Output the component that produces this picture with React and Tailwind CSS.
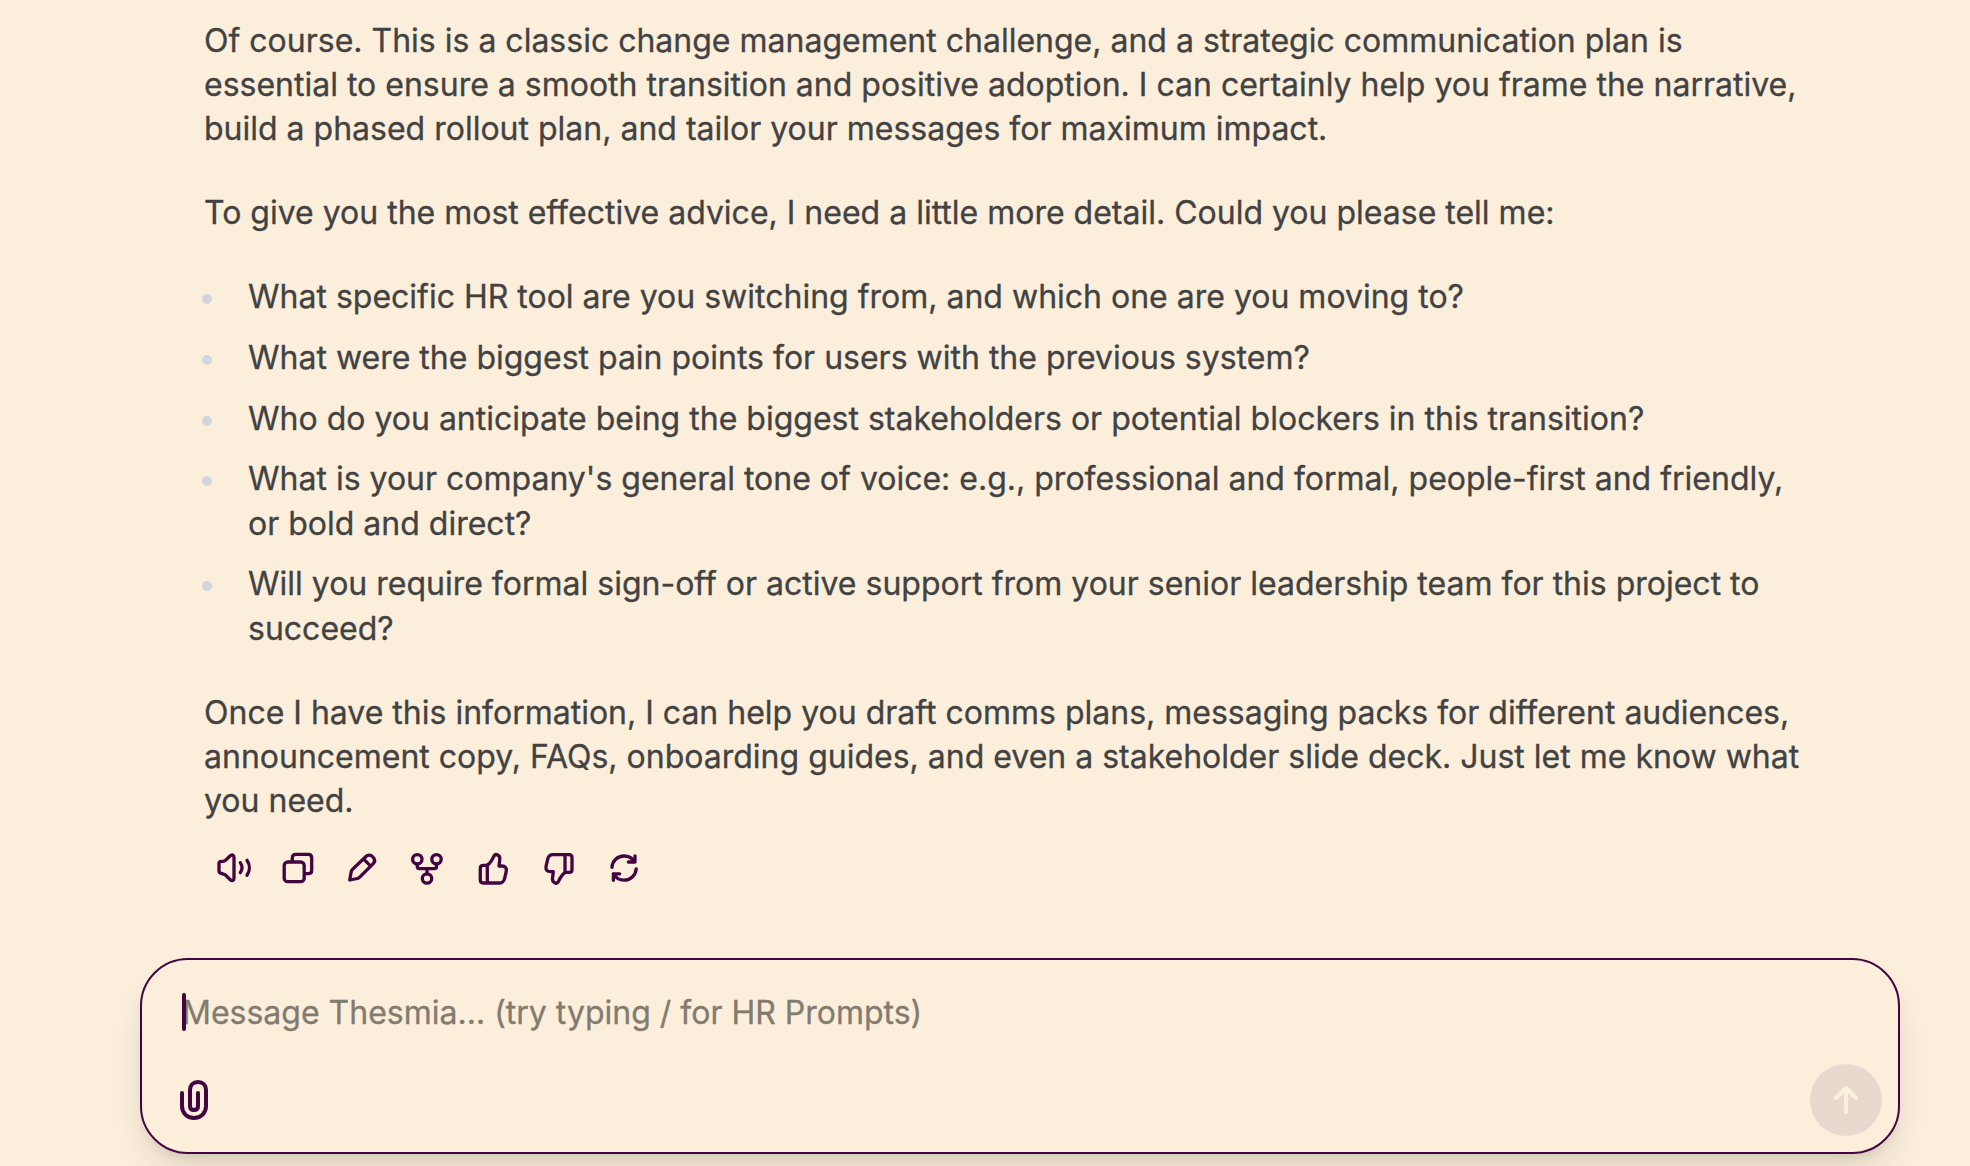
import React from "react";

const questions = [
  "What specific HR tool are you switching from, and which one are you moving to?",
  "What were the biggest pain points for users with the previous system?",
  "Who do you anticipate being the biggest stakeholders or potential blockers in this transition?",
  "What is your company's general tone of voice: e.g., professional and formal, people-first and friendly, or bold and direct?",
  "Will you require formal sign-off or active support from your senior leadership team for this project to succeed?",
];

const ThumbShape = () => (
  <path d="M11.3 16V33M7.3 15.3H9.8C11.5 15.3 12.3 14.6 13.2 13.6C14.6 12 15.5 10.8 16.3 9.3L18 6C18.7 4.7 19.6 4.2 20.8 4.6C23 5.3 24.1 7.2 23.8 9.4L23 16H25.8C29.3 16 31 18.2 30.2 21.5L28.6 28.5C27.9 31.6 26.3 33 23.3 33H7.3C5.3 33 4.3 32 4.3 30V18.3C4.3 16.3 5.3 15.3 7.3 15.3Z" />
);

const actions = [
  {
    label: "Read aloud",
    icon: (
      <>
        <path d="M3 13.6C3 12 3.8 11.3 5.3 11.3H7.2C8.3 11.3 8.9 11 9.7 10.2L14 6C15.9 4.2 18 4.8 18 7.5V28C18 30.7 15.9 31.3 14 29.5L9.7 25.3C8.9 24.5 8.3 24.2 7.2 24C4.2 23.6 3 22.9 3 21Z" />
        <path d="M24.3 12.7C26.3 15.7 26.3 19.7 24.3 22.7M31 10.3C34.1 14.8 34.1 20.8 31 25.3" />
      </>
    ),
  },
  {
    label: "Copy",
    icon: (
      <>
        <rect x="3.2" y="12" width="20" height="19.7" rx="3.5" />
        <path d="M11.3 11.5V7.8C11.3 5.5 12.5 4.3 14.8 4.3H27.2C29.5 4.3 30.7 5.5 30.7 7.8V20.2C30.7 22.5 29.5 23.7 27.2 23.7H24" />
      </>
    ),
  },
  {
    label: "Edit",
    icon: (
      <path d="M18 9.3L24.4 15.8M3.7 30L5.2 21.8C5.4 20.8 5.8 20.1 6.5 19.4L19.7 6.7C22 4.4 24.7 4.6 26.8 6.8C29 9 29.1 11.8 26.8 14.2L13.7 27.2C13 27.9 12.4 28.3 11.4 28.5Z" />
    ),
  },
  {
    label: "Branch",
    icon: (
      <>
        <circle cx="6.3" cy="9.3" r="4.7" />
        <circle cx="25.5" cy="9.3" r="4.7" />
        <circle cx="16" cy="28.5" r="4.7" />
        <path d="M6.3 14V16.6C6.3 18 7 18.7 8.3 18.7H23.5C24.8 18.7 25.5 18 25.5 16.6V14M16 18.7V23.8" />
      </>
    ),
  },
  { label: "Good response", icon: <ThumbShape /> },
  {
    label: "Bad response",
    icon: (
      <g transform="translate(35.3 37.7) rotate(180)">
        <ThumbShape />
      </g>
    ),
  },
  {
    label: "Regenerate",
    icon: (
      <>
        <path d="M6 17.3C6.3 10.8 11.5 6 18 6C22.6 6 26.6 8.3 28.7 12M29 5.8V12H22.4" />
        <path d="M30.2 18.8C29.6 25.5 24.6 30.2 18 30.2C13.5 30.2 9.5 27.6 7.4 23.8M13.7 23.8H7.4V30.3" />
      </>
    ),
  },
];

const Message = () => {
  return (
    <article className="ml-[204px] w-[1606px] text-[32px] leading-[44px] text-[#424242] [-webkit-text-stroke:0.3px]">
      <p>
        Of course. This is a classic change management challenge, and a strategic communication plan is
        <br />
        essential to ensure a smooth transition and positive adoption. I can certainly help you frame the narrative,
        <br />
        build a phased rollout plan, and tailor your messages for maximum impact.
      </p>
      <p className="mt-10">
        To give you the most effective advice, I need a little more detail. Could you please tell me:
      </p>

      {/* Questions */}
      <ul className="mt-[40.4px] flex flex-col gap-4">
        {questions.map((question) => (
          <li key={question} className="flex leading-[44.6px]">
            <span className="-ml-0.5 mr-9 mt-[19px] size-2.5 shrink-0 rounded-full bg-gray-300" />
            <span>{question}</span>
          </li>
        ))}
      </ul>

      <p className="mt-[39.6px]">
        Once I have this information, I can help you draft comms plans, messaging packs for different audiences,
        <br />
        announcement copy, FAQs, onboarding guides, and even a stakeholder slide deck. Just let me know what
        <br />
        you need.
      </p>
    </article>
  );
};

const Actions = () => {
  return (
    <div className="ml-[216px] mt-[27px] flex gap-[29px]">
      {actions.map(({ label, icon }) => (
        <button key={label} aria-label={label} className="size-9">
          <svg viewBox="0 0 36 36" fill="none" stroke="currentColor" strokeWidth="3.3" strokeLinecap="round" strokeLinejoin="round" className="size-9">
            {icon}
          </svg>
        </button>
      ))}
    </div>
  );
};

const Composer = () => {
  return (
    <div className="ml-[140px] mt-[72px] flex h-[196px] w-[1760px] flex-col justify-between rounded-[48px] border-2 border-[#420542] bg-[#fbeedb] pb-4 pl-10 pr-4 pt-[33px] shadow-[0_20px_36px_-6px_rgba(0,0,0,0.11),0_8px_12px_-4px_rgba(0,0,0,0.08)]">
      <div className="flex h-[38px] items-center">
        <span className="z-10 -mr-1 h-[38px] w-1 rounded-sm bg-[#420542]" />
        <span className="pt-0.5 text-[32px] leading-[38px] text-[#827b70] [-webkit-text-stroke:0.3px]">
          Message Thesmia... (try typing / for HR Prompts)
        </span>
      </div>

      <div className="flex items-center justify-between">
        <button aria-label="Attach file" className="-ml-2">
          <svg viewBox="0 0 40 40" fill="none" stroke="currentColor" strokeWidth="4" strokeLinecap="round" className="size-10">
            <path d="M8 13V26C8 32.8 13 38 20 38C27 38 32 32.8 32 26V10C32 5 28.8 2 24 2C19.2 2 16 5 16 10V26C16 28.7 17.5 30 20 30C22.5 30 24 28.7 24 26V13" />
          </svg>
        </button>
        <button aria-label="Send" className="flex size-[72px] items-center justify-center rounded-full bg-[#e8d8ce] text-[#fbf0dc]">
          <svg viewBox="0 0 28 28" fill="none" stroke="currentColor" strokeWidth="4" strokeLinecap="round" strokeLinejoin="round" className="size-7">
            <path d="M14 26V2M4 12L14 2L24 12" />
          </svg>
        </button>
      </div>
    </div>
  );
};

const App = () => {
  return (
    <main className="h-[1166px] overflow-hidden bg-[#fbeedb] pt-[19px] font-['Inter',sans-serif] text-[#420542]">
      <Message />
      <Actions />
      <Composer />
    </main>
  );
};

export default App;
